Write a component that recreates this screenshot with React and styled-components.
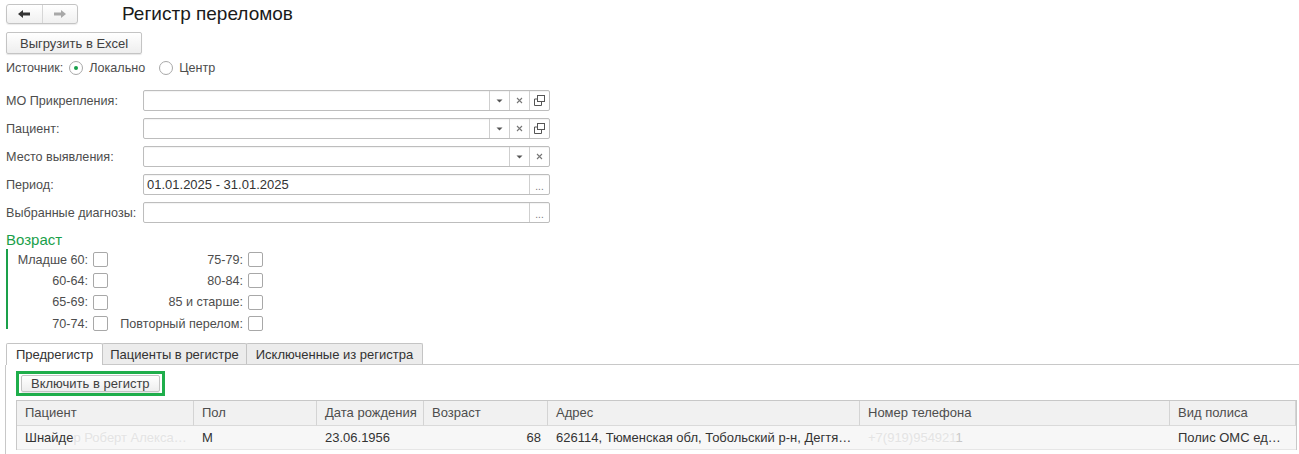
import React from "react";
import styled, { createGlobalStyle } from "styled-components";

const Global = createGlobalStyle`
  html, body { margin: 0; padding: 0; background: #fff; }
  body { font-family: "Liberation Sans", Arial, sans-serif; font-size: 13px; color: #4d4d4d; overflow: hidden; }
  * { box-sizing: border-box; }
`;

const Page = styled.div`
  width: 1299px;
  height: 454px;
  padding: 4px 0 0 6px;
  display: flex;
  flex-direction: column;
  overflow: hidden;
`;

const Header = styled.div`
  display: flex;
  align-items: center;
  height: 20px;
`;

const NavGroup = styled.div`
  display: flex;
  width: 72px;
  height: 20px;
  border: 1px solid #c4c4c4;
  border-radius: 3px;
  background: linear-gradient(#fff, #f0f0f0);
  box-shadow: 0 1px 1px rgba(0,0,0,0.08);
`;

const NavBtn = styled.div`
  flex: 1;
  display: flex;
  align-items: center;
  justify-content: center;
  & + & { border-left: 1px solid #d6d6d6; }
`;

const Title = styled.div`
  margin-left: 44px;
  font-size: 19px;
  color: #1a1a1a;
  line-height: 20px;
`;

const Button = styled.div`
  display: inline-flex;
  align-items: center;
  justify-content: center;
  height: ${p => p.$h || 22}px;
  padding: 0 ${p => p.$px || 12}px;
  border: 1px solid #c4c4c4;
  border-radius: 2px;
  background: linear-gradient(#fff, #eeeeee);
  box-shadow: 0 1px 1px rgba(0,0,0,0.1);
  color: #404040;
  font-size: 13px;
  white-space: nowrap;
`;

const ExcelRow = styled.div`
  margin-top: 8px;
  display: flex;
`;

const SourceRow = styled.div`
  margin-top: 6px;
  display: flex;
  align-items: center;
  height: 16px;
  gap: 6px;
  font-size: 12.6px;
`;

const Radio = styled.span`
  width: 14px;
  height: 14px;
  border-radius: 50%;
  border: 1px solid #a8a8a8;
  background: #fff;
  display: inline-flex;
  align-items: center;
  justify-content: center;
  margin-left: ${p => p.$ml || 0}px;
  &::after {
    content: "";
    width: 4px;
    height: 4px;
    border-radius: 50%;
    background: ${p => (p.$on ? "#16a04a" : "transparent")};
  }
`;

const Fields = styled.div`
  margin-top: 14px;
  display: flex;
  flex-direction: column;
  gap: 7px;
`;

const FieldRow = styled.div`
  display: flex;
  align-items: center;
  height: 21px;
`;

const Label = styled.div`
  width: 137px;
  white-space: nowrap;
  color: #4d4d4d;
  font-size: 12.6px;
`;

const Input = styled.div`
  width: 407px;
  height: 21px;
  border: 1px solid #bdbdbd;
  border-radius: 2px;
  display: flex;
  background: #fff;
  box-shadow: inset 0 1px 1px rgba(0,0,0,0.05);
`;

const InputText = styled.div`
  flex: 1;
  padding-left: 3px;
  line-height: 19px;
  color: #333;
`;

const InBtn = styled.div`
  width: 20px;
  border-left: 1px solid #cfcfcf;
  display: flex;
  align-items: center;
  justify-content: center;
  color: #777;
  font-size: 9px;
`;

const AgeTitle = styled.div`
  margin-top: 9px;
  color: #1aa04a;
  font-size: 15px;
  line-height: 16px;
`;

const AgeGroup = styled.div`
  margin-top: 1px;
  border-left: 2px solid #1aa04a;
  height: 80px;
  display: grid;
  grid-template-columns: 100px 155px;
  grid-auto-rows: 21.3px;
  align-items: center;
`;

const CheckItem = styled.div`
  display: flex;
  align-items: center;
  justify-content: flex-end;
  gap: 5px;
  white-space: nowrap;
  color: #4d4d4d;
  font-size: 12.6px;
`;

const Check = styled.span`
  width: 15px;
  height: 15px;
  border: 1px solid #a8a8a8;
  border-radius: 2px;
  background: #fff;
`;

const Tabs = styled.div`
  margin-top: 14px;
  display: flex;
  align-items: flex-end;
  height: 22px;
  border-bottom: 1px solid #c8c8c8;
  margin-right: -6px;
`;

const Tab = styled.div`
  height: ${p => (p.$active ? 22 : 21)}px;
  padding: 0 ${p => p.$px || 9}px;
  display: flex;
  align-items: center;
  border: 1px solid #c4c4c4;
  border-bottom: none;
  margin-left: ${p => (p.$first ? 0 : -1)}px;
  margin-bottom: ${p => (p.$active ? -1 : 0)}px;
  background: ${p => (p.$active ? "#fff" : "#ececec")};
  color: #333;
  border-radius: 2px 2px 0 0;
  white-space: nowrap;
  position: relative;
`;

const Panel = styled.div`
  flex: 1;
  border-left: 1px solid #c8c8c8;
  margin-left: -1px;
  padding: 6px 0 0 10px;
  display: flex;
  flex-direction: column;
`;

const Highlight = styled.div`
  align-self: flex-start;
  border: 3px solid #1fae4b;
  padding: 1px 2px;
  background: #fff;
`;

const Table = styled.div`
  margin-top: 4px;
  width: 1281px;
  border: 1px solid #c8c8c8;
  border-bottom: none;
  display: grid;
  grid-template-columns: 177px 123px 107px 124px 312px 310px 126px;
`;

const HeadCell = styled.div`
  height: 25px;
  line-height: 24px;
  padding-left: 8px;
  background: #f1f1f1;
  border-right: 1px solid #d4d4d4;
  border-bottom: 1px solid #dadada;
  color: #4d4d4d;
  white-space: nowrap;
  overflow: hidden;
`;

const Cell = styled.div`
  height: 24px;
  line-height: 24px;
  padding: 0 ${p => p.$pr || 8}px 0 8px;
  background: #f7f7f7;
  color: #333;
  white-space: nowrap;
  overflow: hidden;
  text-align: ${p => p.$align || "left"};
  border-bottom: 1px solid #e6e6e6;
`;

const Blur = styled.span`
  color: #e4e4e4;
  text-shadow: 0 0 4px #fff;
`;

const Faint = styled.span`
  color: #c8c8c8;
`;

const DotsText = styled.span`
  color: #777;
  font-size: 10px;
  margin-top: 4px;
`;

const ArrowL = () => (
  <svg width="14" height="10" viewBox="0 0 14 10">
    <path d="M1 5 L6 1 L6 3.6 L13 3.6 L13 6.4 L6 6.4 L6 9 Z" fill="#333" />
  </svg>
);
const ArrowR = () => (
  <svg width="14" height="10" viewBox="0 0 14 10">
    <path d="M13 5 L8 1 L8 3.6 L1 3.6 L1 6.4 L8 6.4 L8 9 Z" fill="#a8a8a8" />
  </svg>
);
const Drop = () => (
  <svg width="7" height="4" viewBox="0 0 7 4"><path d="M0.5 0.5 L6.5 0.5 L3.5 3.5 Z" fill="#555" /></svg>
);
const Clear = () => (
  <svg width="7" height="7" viewBox="0 0 7 7"><path d="M1 1 L6 6 M6 1 L1 6" stroke="#777" strokeWidth="1.1" /></svg>
);
const OpenIc = () => (
  <svg width="11" height="11" viewBox="0 0 11 11">
    <rect x="3.5" y="0.5" width="7" height="6" fill="none" stroke="#555" />
    <path d="M0.5 4 V10.5 H7.5 V7" fill="none" stroke="#555" />
    <path d="M0.5 4 H3.5" fill="none" stroke="#555" />
  </svg>
);

const fields = [
  { label: "МО Прикрепления:", btns: ["d", "x", "o"] },
  { label: "Пациент:", btns: ["d", "x", "o"] },
  { label: "Место выявления:", btns: ["d", "x"] },
  { label: "Период:", value: "01.01.2025 - 31.01.2025", btns: ["."] },
  { label: "Выбранные диагнозы:", btns: ["."] },
];

const ages = [
  ["Младше 60:", "75-79:"],
  ["60-64:", "80-84:"],
  ["65-69:", "85 и старше:"],
  ["70-74:", "Повторный перелом:"],
];

export default function App() {
  return (
    <>
      <Global />
      <Page>
        <Header>
          <NavGroup>
            <NavBtn><ArrowL /></NavBtn>
            <NavBtn><ArrowR /></NavBtn>
          </NavGroup>
          <Title>Регистр переломов</Title>
        </Header>

        <ExcelRow>
          <Button $px={13}>Выгрузить в Excel</Button>
        </ExcelRow>

        <SourceRow>
          <span>Источник:</span>
          <Radio $on />
          <span>Локально</span>
          <Radio $ml={8} />
          <span>Центр</span>
        </SourceRow>

        <Fields>
          {fields.map(f => (
            <FieldRow key={f.label}>
              <Label>{f.label}</Label>
              <Input>
                <InputText>{f.value}</InputText>
                {f.btns.map((b, i) => (
                  <InBtn key={i}>
                    {b === "d" && <Drop />}
                    {b === "x" && <Clear />}
                    {b === "o" && <OpenIc />}
                    {b === "." && <DotsText>...</DotsText>}
                  </InBtn>
                ))}
              </Input>
            </FieldRow>
          ))}
        </Fields>

        <AgeTitle>Возраст</AgeTitle>
        <AgeGroup>
          {ages.map(([a, b]) => (
            <React.Fragment key={a}>
              <CheckItem>{a}<Check /></CheckItem>
              <CheckItem>{b}<Check /></CheckItem>
            </React.Fragment>
          ))}
        </AgeGroup>

        <Tabs>
          <Tab $first $active $px={9}>Предрегистр</Tab>
          <Tab $px={7}>Пациенты в регистре</Tab>
          <Tab $px={9}>Исключенные из регистра</Tab>
        </Tabs>
        <Panel>
          <Highlight>
            <Button $h={17} $px={9}>Включить в регистр</Button>
          </Highlight>
          <Table>
            <HeadCell>Пациент</HeadCell>
            <HeadCell>Пол</HeadCell>
            <HeadCell>Дата рождения</HeadCell>
            <HeadCell>Возраст</HeadCell>
            <HeadCell>Адрес</HeadCell>
            <HeadCell>Номер телефона</HeadCell>
            <HeadCell>Вид полиса</HeadCell>

            <Cell>Шнайде<Blur>р Роберт Алекса…</Blur></Cell>
            <Cell>М</Cell>
            <Cell>23.06.1956</Cell>
            <Cell $align="right" $pr={7}>68</Cell>
            <Cell>626114, Тюменская обл, Тобольский р-н, Дегтя…</Cell>
            <Cell><Blur>+7(919)954921</Blur><Faint>1</Faint></Cell>
            <Cell>Полис ОМС ед…</Cell>
          </Table>
        </Panel>
      </Page>
    </>
  );
}
